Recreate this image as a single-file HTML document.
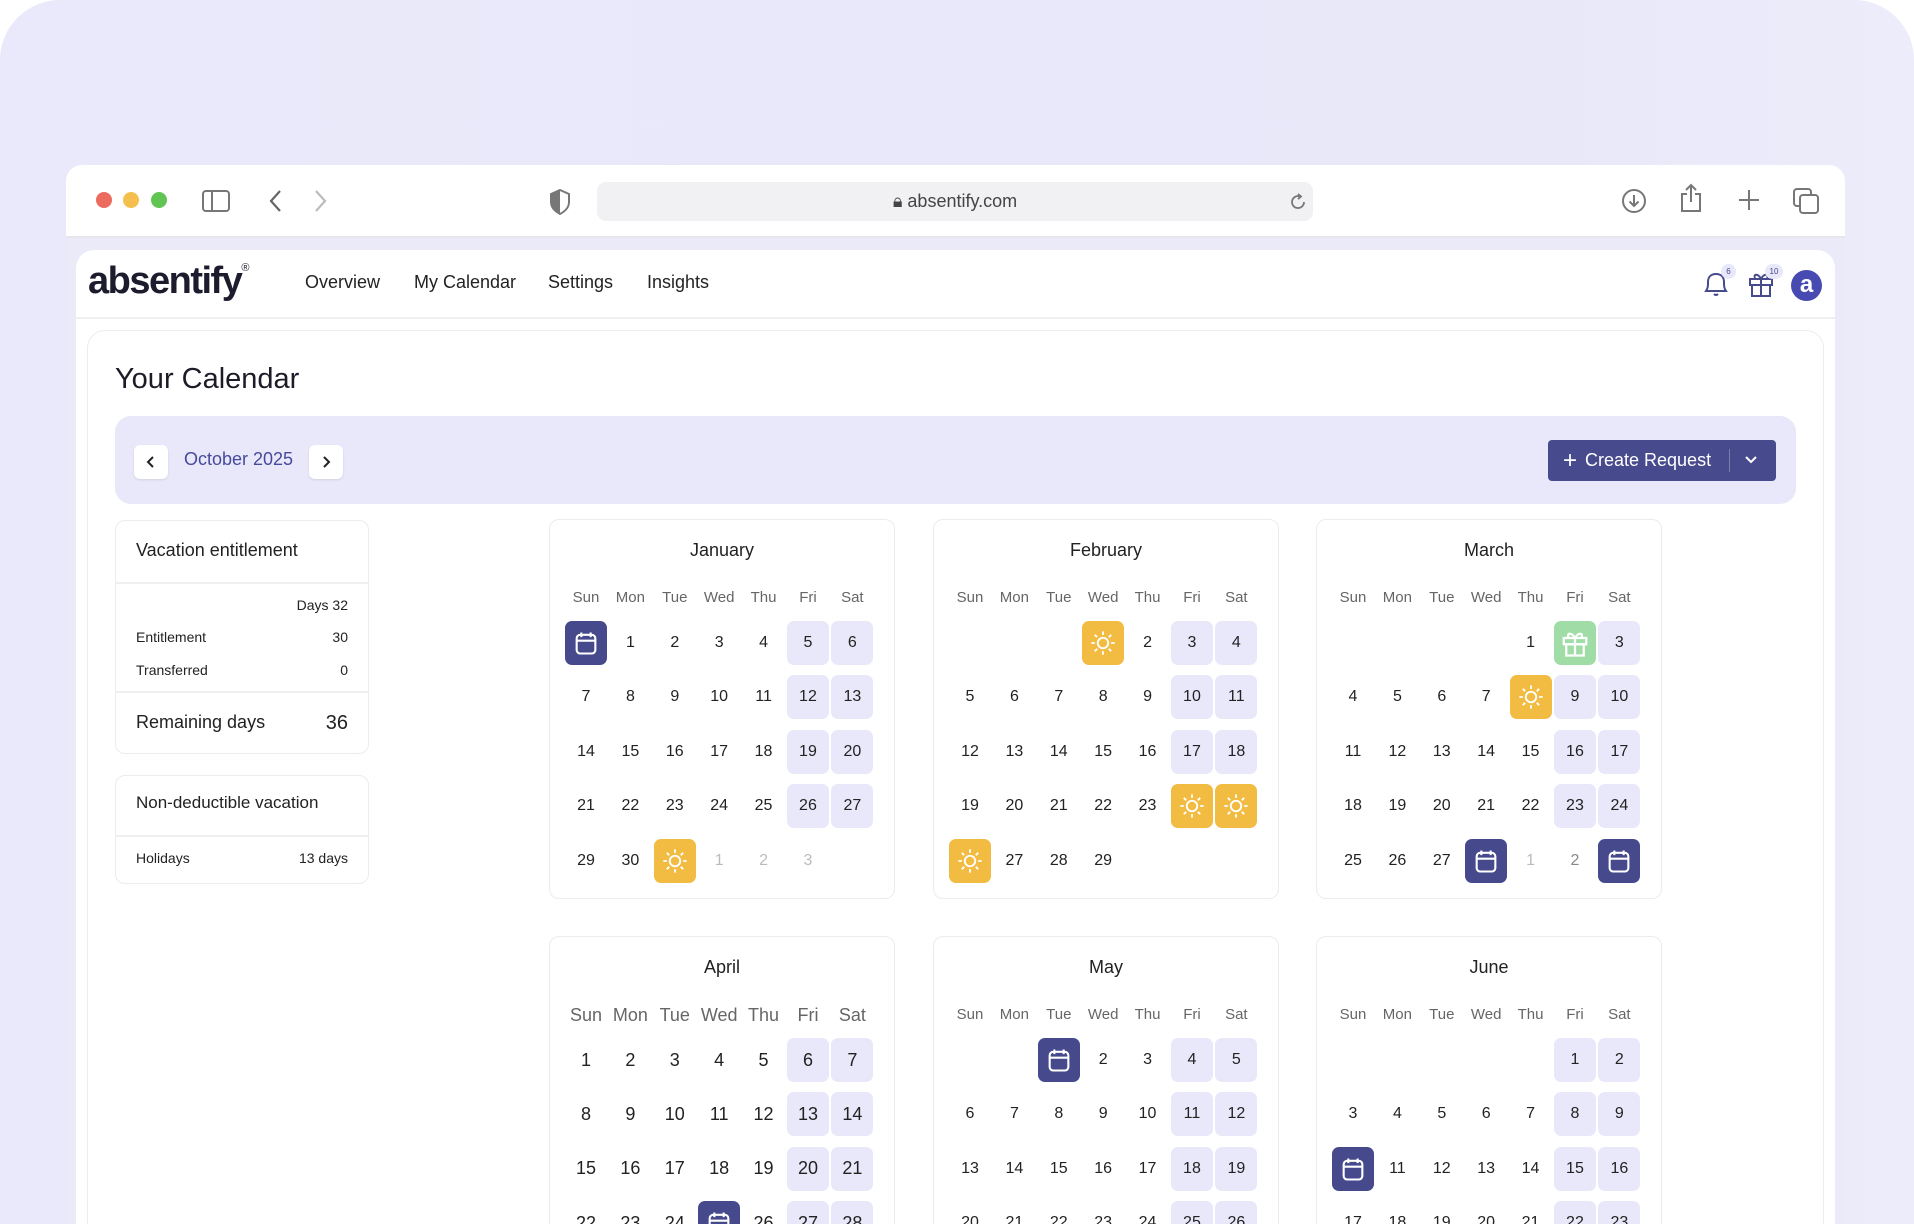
<!DOCTYPE html><html><head><meta charset="utf-8"><style>
*{box-sizing:border-box;margin:0;padding:0}
html{width:1914px;height:1224px;overflow:hidden}
body{width:1914px;height:1224px;overflow:hidden;background:#fff;font-family:"Liberation Sans",sans-serif;color:#222;position:relative}
.clip{position:absolute;left:0;top:0;width:1914px;height:1224px;overflow:hidden}
.bg{position:absolute;inset:0;background:linear-gradient(90deg,#e9e9fb,#e8e8f9 80%,#ececfa);border-radius:60px 60px 0 0}
.win{position:absolute;left:66px;top:165px;width:1779px;height:1059px;background:#eaeaf9;border-radius:16px 16px 0 0;overflow:hidden}
.tb{position:absolute;left:0;top:0;width:100%;height:73px;background:#fff;border-bottom:2px solid #e6e6ea}
.dot{position:absolute;top:27px;width:16px;height:16px;border-radius:50%}
.url{position:absolute;left:531px;top:17px;width:716px;height:39px;background:#f1f1f3;border-radius:9px;font-size:18px;color:#444;text-align:center;line-height:39px}
.app{position:absolute;left:10px;top:85px;width:1759px;height:974px;background:#fff;border-radius:18px 18px 0 0;overflow:hidden}
.hdr{position:absolute;left:0;top:0;width:100%;height:69px;border-bottom:2px solid #efeff2}
.nav{position:absolute;top:22px;font-size:18px;color:#222}
.main{position:absolute;left:11px;top:80px;width:1737px;height:1000px;border:1.5px solid #ececef;border-radius:18px}
.bar{position:absolute;left:115px;top:416px;width:1681px;height:88px;background:#e8e8fa;border-radius:16px}
.nb{position:absolute;top:29px;width:34px;height:34px;background:#fff;border-radius:6px;box-shadow:0 1px 2px rgba(0,0,0,.1)}
.card{position:absolute;background:#fff;border:1.5px solid #ececef;border-radius:10px}
.lc{position:absolute;left:115px;width:254px}
.row{position:absolute;left:20px;right:20px;font-size:14px;display:flex;justify-content:space-between}
.sep{position:absolute;left:0;right:0;height:2px;background:#f0f0f3}
.m{position:absolute;width:346px;height:380px;padding:0 15px;overflow:hidden}
.m.r2{height:288px;border-bottom:none;border-radius:10px 10px 0 0}
.m h3{font-weight:normal;font-size:18px;text-align:center;margin-top:18px;height:24px;line-height:24px;color:#222}
.wd,.g{display:grid;grid-template-columns:repeat(7,42px);column-gap:2.4px}
.wd{margin-top:26px;height:20px;line-height:20px;font-size:15px;color:#666;text-align:center}
.g{margin-top:13px;row-gap:10.4px;grid-auto-rows:44px}
.g span{display:flex;align-items:center;justify-content:center;font-size:16px;color:#222;border-radius:7px}
.g .w{background:#e8e8fa}.g .f{color:#bbb}
.g .c{background:#464a8d}.g .s{background:#f2bb42}.g .p{background:#9fdca6}
.big .wd{font-size:18px}.big .g span{font-size:18px}
</style></head><body><div class="clip">
<div class="bg"></div>
<div class="win">
<div class="tb">
<div class="dot" style="left:30px;background:#ed6a5e"></div><div class="dot" style="left:57px;background:#f4bf4f"></div><div class="dot" style="left:85px;background:#61c554"></div>
<svg style="position:absolute;left:136px;top:25px" width="28" height="22" viewBox="0 0 28 22" fill="none" stroke="#777" stroke-width="2"><rect x="1" y="1" width="26" height="20" rx="3"/><line x1="10" y1="1" x2="10" y2="21"/></svg>
<svg style="position:absolute;left:202px;top:24px" width="14" height="24" viewBox="0 0 14 24" fill="none" stroke="#666" stroke-width="2.2"><path d="M12 2 L3 12 L12 22"/></svg>
<svg style="position:absolute;left:248px;top:24px" width="14" height="24" viewBox="0 0 14 24" fill="none" stroke="#bbb" stroke-width="2.2"><path d="M2 2 L11 12 L2 22"/></svg>
<svg style="position:absolute;left:484px;top:24px" width="20" height="26" viewBox="0 0 20 26"><path d="M10 1 L19 5 V13 C19 19 14 23 10 25 C6 23 1 19 1 13 V5Z" fill="none" stroke="#777" stroke-width="2"/><path d="M10 1 L1 5 V13 C1 19 6 23 10 25Z" fill="#777"/></svg>
<div class="url">🔒︎ absentify.com</div>
<svg style="position:absolute;left:1222px;top:27px" width="20" height="20" viewBox="0 0 20 20" fill="none" stroke="#777" stroke-width="1.8"><path d="M16 10 A6 6 0 1 1 12 4.4"/><path d="M10 2 L13 4.5 L10 7"/></svg>
<svg style="position:absolute;left:1555px;top:23px" width="26" height="26" viewBox="0 0 26 26" fill="none" stroke="#777" stroke-width="2"><circle cx="13" cy="13" r="11"/><path d="M13 7 V18 M8.5 13.5 L13 18 L17.5 13.5"/></svg>
<svg style="position:absolute;left:1614px;top:18px" width="22" height="30" viewBox="0 0 22 30" fill="none" stroke="#777" stroke-width="2"><path d="M7 11 H2 V28 H20 V11 H15 M11 19 V2 M6 7 L11 2 L16 7"/></svg>
<svg style="position:absolute;left:1672px;top:24px" width="22" height="22" viewBox="0 0 22 22" stroke="#777" stroke-width="2"><path d="M11 1 V21 M1 11 H21"/></svg>
<svg style="position:absolute;left:1727px;top:23px" width="26" height="26" viewBox="0 0 26 26" fill="none" stroke="#777" stroke-width="2"><rect x="1" y="1" width="17" height="17" rx="3"/><rect x="7" y="7" width="18" height="18" rx="3" fill="#fff"/></svg>
</div>
<div class="app">
<div class="hdr">
<div style="position:absolute;left:12px;top:10px;font-size:38px;font-weight:bold;color:#1c1c2e;letter-spacing:-1.5px">absentify<sup style="font-size:11px;font-weight:normal;vertical-align:22px">®</sup></div>
<div class="nav" style="left:229px">Overview</div><div class="nav" style="left:338px">My Calendar</div><div class="nav" style="left:472px">Settings</div><div class="nav" style="left:571px">Insights</div>
<svg style="position:absolute;left:1627px;top:20px" width="26" height="28" viewBox="0 0 26 28" fill="none" stroke="#474a8c" stroke-width="2"><path d="M3 21 C5 18 5 16 5 12 C5 7 8 4 13 4 C18 4 21 7 21 12 C21 16 21 18 23 21 Z M11 24 Q13 26 15 24"/></svg>
<div style="position:absolute;left:1645px;top:14px;width:15px;height:15px;border-radius:50%;background:#e8e8fa;font-size:8px;color:#474a8c;text-align:center;line-height:15px">6</div>
<svg style="position:absolute;left:1672px;top:21px" width="26" height="26" viewBox="0 0 26 26" fill="none" stroke="#474a8c" stroke-width="2"><rect x="2" y="8" width="22" height="6"/><rect x="4" y="14" width="18" height="11"/><path d="M13 8 V25 M13 8 C10 2 5 3 7 7 M13 8 C16 2 21 3 19 7"/></svg>
<div style="position:absolute;left:1689px;top:14px;width:18px;height:15px;border-radius:8px;background:#e8e8fa;font-size:8px;color:#474a8c;text-align:center;line-height:15px">10</div>
<div style="position:absolute;left:1715px;top:20px;width:31px;height:31px;border-radius:50%;background:#474ab0;color:#fff;font-size:24px;font-weight:bold;text-align:center;line-height:29px">a</div>
</div>
<div class="main"></div>
</div>
</div>
<div style="position:absolute;left:115px;top:363px;font-size:29px;color:#1c1c28">Your Calendar</div>
<div class="bar">
<div class="nb" style="left:19px"><svg width="34" height="34" viewBox="0 0 34 34" fill="none" stroke="#222" stroke-width="2"><path d="M19 12 L14 17 L19 22"/></svg></div>
<div style="position:absolute;left:69px;top:33px;font-size:18px;color:#474a9a">October 2025</div>
<div class="nb" style="left:194px"><svg width="34" height="34" viewBox="0 0 34 34" fill="none" stroke="#222" stroke-width="2"><path d="M15 12 L20 17 L15 22"/></svg></div>
<div style="position:absolute;left:1433px;top:24px;width:228px;height:41px;background:#474a8c;border-radius:4px;color:#fff;font-size:18px;line-height:41px">
<span style="position:absolute;left:15px;font-size:24px">+</span><span style="position:absolute;left:37px">Create Request</span>
<div style="position:absolute;left:181px;top:9px;width:1px;height:23px;background:#7a7db0"></div>
<svg style="position:absolute;left:196px;top:15px" width="14" height="10" viewBox="0 0 14 10" fill="none" stroke="#fff" stroke-width="2"><path d="M2 2 L7 7 L12 2"/></svg></div>
</div>
<div class="card lc" style="top:520px;height:234px">
<div style="position:absolute;left:20px;top:19px;font-size:18px">Vacation entitlement</div>
<div class="sep" style="top:61px"></div>
<div class="row" style="top:76px;justify-content:flex-end">Days 32</div>
<div class="row" style="top:108px"><span>Entitlement</span><span>30</span></div>
<div class="row" style="top:141px"><span>Transferred</span><span>0</span></div>
<div class="sep" style="top:170px"></div>
<div class="row" style="top:191px;font-size:18px"><span>Remaining days</span><span style="font-size:20px">36</span></div>
</div>
<div class="card lc" style="top:775px;height:109px">
<div style="position:absolute;left:20px;top:17px;font-size:17px">Non-deductible vacation</div>
<div class="sep" style="top:59px"></div>
<div class="row" style="top:74px"><span>Holidays</span><span>13 days</span></div>
</div>
<svg width="0" height="0" style="position:absolute"><defs>
<symbol id="cal" viewBox="0 0 24 24"><g fill="none" stroke="#fff" stroke-width="1.8"><rect x="4" y="5" width="16" height="16" rx="3"/><path d="M4 10 H20 M8 3 V7 M16 3 V7"/></g></symbol>
<symbol id="sun" viewBox="0 0 24 24"><g fill="none" stroke="#fff" stroke-width="1.6"><circle cx="12" cy="12" r="4.5"/><path d="M12 2V5M12 19V22M2 12H5M19 12H22M5 5L7 7M17 17L19 19M5 19L7 17M17 7L19 5"/></g></symbol>
<symbol id="gift" viewBox="0 0 24 24"><g fill="none" stroke="#fff" stroke-width="1.8"><rect x="3" y="8" width="18" height="5"/><rect x="5" y="13" width="14" height="9"/><path d="M12 8V22M12 8C9 3 5 4 7 8M12 8C15 3 19 4 17 8"/></g></symbol>
</defs></svg>
<div class="card m" style="left:549px;top:519px"><h3>January</h3><div class="wd"><span>Sun</span><span>Mon</span><span>Tue</span><span>Wed</span><span>Thu</span><span>Fri</span><span>Sat</span></div>
<div class="g"><span class="c"><svg width="28" height="28"><use href="#cal"/></svg></span><span>1</span><span>2</span><span>3</span><span>4</span><span class="w">5</span><span class="w">6</span>
<span>7</span><span>8</span><span>9</span><span>10</span><span>11</span><span class="w">12</span><span class="w">13</span>
<span>14</span><span>15</span><span>16</span><span>17</span><span>18</span><span class="w">19</span><span class="w">20</span>
<span>21</span><span>22</span><span>23</span><span>24</span><span>25</span><span class="w">26</span><span class="w">27</span>
<span>29</span><span>30</span><span class="s"><svg width="28" height="28"><use href="#sun"/></svg></span><span class="f">1</span><span class="f">2</span><span class="f">3</span><span></span></div></div>
<div class="card m" style="left:933px;top:519px"><h3>February</h3><div class="wd"><span>Sun</span><span>Mon</span><span>Tue</span><span>Wed</span><span>Thu</span><span>Fri</span><span>Sat</span></div>
<div class="g"><span></span><span></span><span></span><span class="s"><svg width="28" height="28"><use href="#sun"/></svg></span><span>2</span><span class="w">3</span><span class="w">4</span>
<span>5</span><span>6</span><span>7</span><span>8</span><span>9</span><span class="w">10</span><span class="w">11</span>
<span>12</span><span>13</span><span>14</span><span>15</span><span>16</span><span class="w">17</span><span class="w">18</span>
<span>19</span><span>20</span><span>21</span><span>22</span><span>23</span><span class="s"><svg width="28" height="28"><use href="#sun"/></svg></span><span class="s"><svg width="28" height="28"><use href="#sun"/></svg></span>
<span class="s"><svg width="28" height="28"><use href="#sun"/></svg></span><span>27</span><span>28</span><span>29</span></div></div>
<div class="card m" style="left:1316px;top:519px"><h3>March</h3><div class="wd"><span>Sun</span><span>Mon</span><span>Tue</span><span>Wed</span><span>Thu</span><span>Fri</span><span>Sat</span></div>
<div class="g"><span></span><span></span><span></span><span></span><span>1</span><span class="p"><svg width="30" height="30"><use href="#gift"/></svg></span><span class="w">3</span>
<span>4</span><span>5</span><span>6</span><span>7</span><span class="s"><svg width="28" height="28"><use href="#sun"/></svg></span><span class="w">9</span><span class="w">10</span>
<span>11</span><span>12</span><span>13</span><span>14</span><span>15</span><span class="w">16</span><span class="w">17</span>
<span>18</span><span>19</span><span>20</span><span>21</span><span>22</span><span class="w">23</span><span class="w">24</span>
<span>25</span><span>26</span><span>27</span><span class="c"><svg width="28" height="28"><use href="#cal"/></svg></span><span class="f">1</span><span style="color:#888">2</span><span class="c"><svg width="28" height="28"><use href="#cal"/></svg></span></div></div>
<div class="card m big r2" style="left:549px;top:936px"><h3>April</h3><div class="wd"><span>Sun</span><span>Mon</span><span>Tue</span><span>Wed</span><span>Thu</span><span>Fri</span><span>Sat</span></div>
<div class="g"><span>1</span><span>2</span><span>3</span><span>4</span><span>5</span><span class="w">6</span><span class="w">7</span>
<span>8</span><span>9</span><span>10</span><span>11</span><span>12</span><span class="w">13</span><span class="w">14</span>
<span>15</span><span>16</span><span>17</span><span>18</span><span>19</span><span class="w">20</span><span class="w">21</span>
<span>22</span><span>23</span><span>24</span><span class="c"><svg width="28" height="28"><use href="#cal"/></svg></span><span>26</span><span class="w">27</span><span class="w">28</span></div></div>
<div class="card m r2" style="left:933px;top:936px"><h3>May</h3><div class="wd"><span>Sun</span><span>Mon</span><span>Tue</span><span>Wed</span><span>Thu</span><span>Fri</span><span>Sat</span></div>
<div class="g"><span></span><span></span><span class="c"><svg width="28" height="28"><use href="#cal"/></svg></span><span>2</span><span>3</span><span class="w">4</span><span class="w">5</span>
<span>6</span><span>7</span><span>8</span><span>9</span><span>10</span><span class="w">11</span><span class="w">12</span>
<span>13</span><span>14</span><span>15</span><span>16</span><span>17</span><span class="w">18</span><span class="w">19</span>
<span>20</span><span>21</span><span>22</span><span>23</span><span>24</span><span class="w">25</span><span class="w">26</span></div></div>
<div class="card m r2" style="left:1316px;top:936px"><h3>June</h3><div class="wd"><span>Sun</span><span>Mon</span><span>Tue</span><span>Wed</span><span>Thu</span><span>Fri</span><span>Sat</span></div>
<div class="g"><span></span><span></span><span></span><span></span><span></span><span class="w">1</span><span class="w">2</span>
<span>3</span><span>4</span><span>5</span><span>6</span><span>7</span><span class="w">8</span><span class="w">9</span>
<span class="c"><svg width="28" height="28"><use href="#cal"/></svg></span><span>11</span><span>12</span><span>13</span><span>14</span><span class="w">15</span><span class="w">16</span>
<span>17</span><span>18</span><span>19</span><span>20</span><span>21</span><span class="w">22</span><span class="w">23</span></div></div>
</div></body></html>
